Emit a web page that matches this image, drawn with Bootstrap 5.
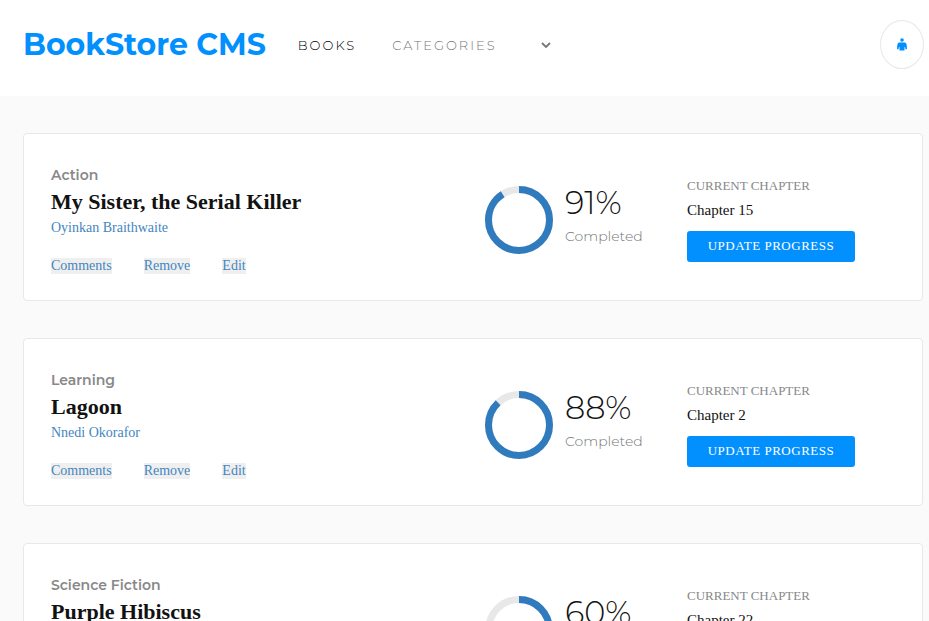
<!DOCTYPE html>
<html lang="en">
<head>
<meta charset="utf-8">
<meta name="viewport" content="width=device-width, initial-scale=1">
<title>BookStore CMS</title>
<link href="https://cdn.jsdelivr.net/npm/bootstrap@5.3.0/dist/css/bootstrap.min.css" rel="stylesheet">
<style>
  body { background: #fafafa; color: #121212; font-family: "Liberation Serif", serif; }
  a { text-decoration: none; }
  .sans { font-family: Montserrat, Inter, sans-serif; }
  .top-bar { background: #fff; min-height: 96px; padding: 20px 5px 27px 23px; }
  .brand { color: #0290ff; font-size: 30px; font-weight: 700; line-height: 48px; margin-right: 32px; }
  .nav-item-text { font-size: 13px; font-weight: 300; letter-spacing: 2px; line-height: 20px; }
  .books-link { color: #000; margin-right: 36px; }
  .category-select {
    width: 164px; padding: 0 24px 0 0; border: 0; color: #777; appearance: none;
    background: #fff url("data:image/svg+xml,%3Csvg xmlns='http://www.w3.org/2000/svg' viewBox='0 0 10 6'%3E%3Cpath d='M1 1l4 4 4-4' fill='none' stroke='%23767676' stroke-width='1.8'/%3E%3C/svg%3E") no-repeat right 5px center / 10px 6px;
  }
  .user-btn { width: 44px; height: 49px; border: 1px solid #e8e8e8; border-radius: 50%; background: #fff; color: #0290ff; }
  .book-list { padding: 37px 6px 37px 23px; gap: 37px; }
  .book { background: #fff; border: 1px solid #e8e8e8; border-radius: 4px; padding: 31px 3px 26px 27px; }
  .genre { color: #888; font-size: 14px; font-weight: 600; line-height: 20px; }
  .book-title { font-size: 22px; font-weight: 700; line-height: 34px; margin: 0; }
  .author { color: #4386bf; font-size: 14px; line-height: 18px; }
  .actions { gap: 32px; margin-top: 21px; }
  .action-btn { border: 0; padding: 0; background: #efefef; color: #4386bf; font-size: 14px; line-height: 16px; }
  .stats { gap: 44px; }
  .ring { width: 68px; height: 68px; margin-top: 21px; }
  .ring circle { fill: none; stroke-width: 7; }
  .ring-track { stroke: #e8e8e8; }
  .ring-value { stroke: #307bbe; }
  .progress-text { width: 78px; margin-top: 18px; }
  .percent { font-size: 32px; font-weight: 300; line-height: 40px; }
  .completed { color: #777; font-size: 14px; font-weight: 300; line-height: 27px; }
  .chapter { margin-top: 11px; }
  .chapter-label { color: #888; font-size: 13px; font-weight: 400; line-height: 20px; }
  .chapter-name { font-size: 15px; line-height: 28px; }
  .update-btn { margin-top: 7px; width: 168px; height: 31px; border: 0; border-radius: 3px; background: #0290ff; color: #fff; font-size: 13px; letter-spacing: .04em; line-height: 19px; padding: 5px 0 7px; }
</style>
<script src="https://cdn.jsdelivr.net/npm/bootstrap@5.3.0/dist/js/bootstrap.bundle.min.js"></script>
</head>
<body>
<header class="top-bar d-flex flex-wrap align-items-center">
  <a class="brand sans" href="#">BookStore CMS</a>
  <nav class="d-flex align-items-center">
    <a class="nav-item-text books-link sans" href="#">BOOKS</a>
    <select class="nav-item-text category-select sans" aria-label="Categories"><option>CATEGORIES</option></select>
  </nav>
  <button class="user-btn d-flex align-items-center justify-content-center ms-auto p-0" type="button" aria-label="Account">
    <svg width="10" height="14" viewBox="0 0 10 14" fill="currentColor" aria-hidden="true"><circle cx="5" cy="2" r="1.800"/><path d="M2 4.500h6q1.400 .4 1.700 2.500L10 11.300H8.500L8 9H7.500V12.600H2.500V9H2L1.500 11.300H0L.3 7Q.6 4.900 2 4.500z"/></svg>
  </button>
</header>
<main class="book-list d-flex flex-column">
  <article class="book"><div class="row g-0">
    <div class="col-12 col-md-6">
      <div class="genre sans">Action</div>
      <h2 class="book-title">My Sister, the Serial Killer</h2>
      <div class="author">Oyinkan Braithwaite</div>
      <div class="actions d-flex"><button class="action-btn" type="button">Comments</button><button class="action-btn" type="button">Remove</button><button class="action-btn" type="button">Edit</button></div>
    </div>
    <div class="stats col-12 col-md-6 d-flex">
      <div class="d-flex gap-2">
        <svg class="ring me-1" viewBox="0 0 68 68" role="img" aria-label="91% completed"><circle class="ring-track" cx="34" cy="34" r="30.500"/><circle class="ring-value" cx="34" cy="34" r="30.500" pathLength="100" stroke-dasharray="91 100" transform="rotate(-90 34 34)"/></svg>
        <div class="progress-text sans"><div class="percent">91%</div><div class="completed">Completed</div></div>
      </div>
      <div class="chapter"><h3 class="chapter-label m-0">CURRENT CHAPTER</h3><div class="chapter-name">Chapter 15</div><button class="update-btn" type="button">UPDATE PROGRESS</button></div>
    </div>
  </div></article>
  <article class="book"><div class="row g-0">
    <div class="col-12 col-md-6">
      <div class="genre sans">Learning</div>
      <h2 class="book-title">Lagoon</h2>
      <div class="author">Nnedi Okorafor</div>
      <div class="actions d-flex"><button class="action-btn" type="button">Comments</button><button class="action-btn" type="button">Remove</button><button class="action-btn" type="button">Edit</button></div>
    </div>
    <div class="stats col-12 col-md-6 d-flex">
      <div class="d-flex gap-2">
        <svg class="ring me-1" viewBox="0 0 68 68" role="img" aria-label="88% completed"><circle class="ring-track" cx="34" cy="34" r="30.500"/><circle class="ring-value" cx="34" cy="34" r="30.500" pathLength="100" stroke-dasharray="88 100" transform="rotate(-90 34 34)"/></svg>
        <div class="progress-text sans"><div class="percent">88%</div><div class="completed">Completed</div></div>
      </div>
      <div class="chapter"><h3 class="chapter-label m-0">CURRENT CHAPTER</h3><div class="chapter-name">Chapter 2</div><button class="update-btn" type="button">UPDATE PROGRESS</button></div>
    </div>
  </div></article>
  <article class="book"><div class="row g-0">
    <div class="col-12 col-md-6">
      <div class="genre sans">Science Fiction</div>
      <h2 class="book-title">Purple Hibiscus</h2>
      <div class="author">Chimamanda Ngozi Adichie</div>
      <div class="actions d-flex"><button class="action-btn" type="button">Comments</button><button class="action-btn" type="button">Remove</button><button class="action-btn" type="button">Edit</button></div>
    </div>
    <div class="stats col-12 col-md-6 d-flex">
      <div class="d-flex gap-2">
        <svg class="ring me-1" viewBox="0 0 68 68" role="img" aria-label="60% completed"><circle class="ring-track" cx="34" cy="34" r="30.500"/><circle class="ring-value" cx="34" cy="34" r="30.500" pathLength="100" stroke-dasharray="60 100" transform="rotate(-90 34 34)"/></svg>
        <div class="progress-text sans"><div class="percent">60%</div><div class="completed">Completed</div></div>
      </div>
      <div class="chapter"><h3 class="chapter-label m-0">CURRENT CHAPTER</h3><div class="chapter-name">Chapter 22</div><button class="update-btn" type="button">UPDATE PROGRESS</button></div>
    </div>
  </div></article>
</main>
</body>
</html>
